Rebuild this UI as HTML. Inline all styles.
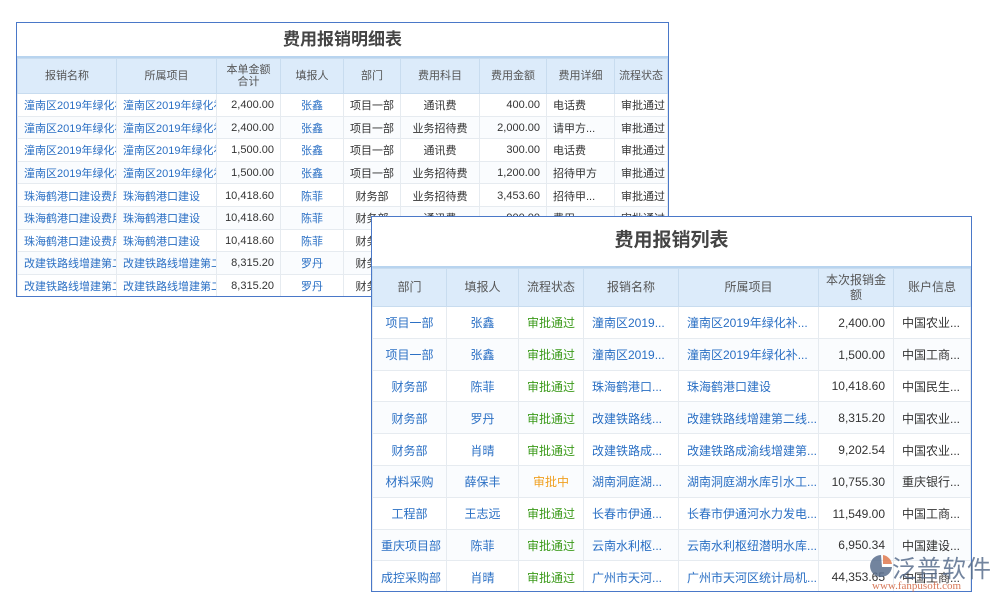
<!DOCTYPE html><html><head><meta charset="utf-8"><style>
*{margin:0;padding:0;box-sizing:border-box}
body{width:1000px;height:600px;background:#fff;position:relative;overflow:hidden;font-family:"Liberation Sans","Noto Sans CJK SC",sans-serif;}
.box{position:absolute;background:#fff;border:1px solid #4a78c8;overflow:hidden}
.title{text-align:center;font-weight:bold;color:#444;}
table{border-collapse:collapse;table-layout:fixed;width:100%}
td,th{border:1px solid #e6ebf0;white-space:nowrap;overflow:hidden;text-overflow:clip;font-weight:normal;vertical-align:middle}
th{background:#dcebfa;color:#555;border-color:#c8dcef}
tr:nth-child(odd) td{background:#fafcfe}
.b{color:#2a6fc4}.g{color:#3b9a1a}.o{color:#f0a020}.k{color:#333}
.r{text-align:right}.c{text-align:center}.l{text-align:left}
#t1{left:16px;top:22px;width:653px;height:275px}
#t1 .title{height:35px;line-height:33px;font-size:17px;border-bottom:2px solid #b8d4ef}
#t1 th{height:35px;font-size:11px;line-height:12px}
#t1 td{height:22.6px;font-size:11px;padding:1px 6px 0}
#t2{left:371px;top:216px;width:601px;height:376px}
#t2 .title{height:51px;line-height:48px;font-size:19px;border-bottom:2px solid #b8d4ef}
#t2 th{height:38px;font-size:12px;line-height:15px}
#t2 td{height:31.8px;font-size:12px;padding:1px 8px 0}
</style></head><body>
<div class="box" id="t1"><div class="title">费用报销明细表</div>
<table><colgroup><col style="width:99px"><col style="width:100px"><col style="width:64px"><col style="width:63px"><col style="width:57px"><col style="width:79px"><col style="width:67px"><col style="width:68px"><col></colgroup>
<tr><th>报销名称</th><th>所属项目</th><th>本单金额<br>合计</th><th>填报人</th><th>部门</th><th>费用科目</th><th>费用金额</th><th>费用详细</th><th>流程状态</th></tr>
<tr><td class="b">潼南区2019年绿化补</td><td class="b">潼南区2019年绿化补</td><td class="r k">2,400.00</td><td class="c b">张鑫</td><td class="c k">项目一部</td><td class="c k">通讯费</td><td class="r k">400.00</td><td class="k">电话费</td><td class="k">审批通过</td></tr>
<tr><td class="b">潼南区2019年绿化补</td><td class="b">潼南区2019年绿化补</td><td class="r k">2,400.00</td><td class="c b">张鑫</td><td class="c k">项目一部</td><td class="c k">业务招待费</td><td class="r k">2,000.00</td><td class="k">请甲方...</td><td class="k">审批通过</td></tr>
<tr><td class="b">潼南区2019年绿化补</td><td class="b">潼南区2019年绿化补</td><td class="r k">1,500.00</td><td class="c b">张鑫</td><td class="c k">项目一部</td><td class="c k">通讯费</td><td class="r k">300.00</td><td class="k">电话费</td><td class="k">审批通过</td></tr>
<tr><td class="b">潼南区2019年绿化补</td><td class="b">潼南区2019年绿化补</td><td class="r k">1,500.00</td><td class="c b">张鑫</td><td class="c k">项目一部</td><td class="c k">业务招待费</td><td class="r k">1,200.00</td><td class="k">招待甲方</td><td class="k">审批通过</td></tr>
<tr><td class="b">珠海鹤港口建设费用</td><td class="b">珠海鹤港口建设</td><td class="r k">10,418.60</td><td class="c b">陈菲</td><td class="c k">财务部</td><td class="c k">业务招待费</td><td class="r k">3,453.60</td><td class="k">招待甲...</td><td class="k">审批通过</td></tr>
<tr><td class="b">珠海鹤港口建设费用</td><td class="b">珠海鹤港口建设</td><td class="r k">10,418.60</td><td class="c b">陈菲</td><td class="c k">财务部</td><td class="c k">通讯费</td><td class="r k">900.00</td><td class="k">费用</td><td class="k">审批通过</td></tr>
<tr><td class="b">珠海鹤港口建设费用</td><td class="b">珠海鹤港口建设</td><td class="r k">10,418.60</td><td class="c b">陈菲</td><td class="c k">财务部</td><td></td><td></td><td></td><td></td></tr>
<tr><td class="b">改建铁路线增建第二</td><td class="b">改建铁路线增建第二</td><td class="r k">8,315.20</td><td class="c b">罗丹</td><td class="c k">财务部</td><td></td><td></td><td></td><td></td></tr>
<tr><td class="b">改建铁路线增建第二</td><td class="b">改建铁路线增建第二</td><td class="r k">8,315.20</td><td class="c b">罗丹</td><td class="c k">财务部</td><td></td><td></td><td></td><td></td></tr>
</table></div>
<div class="box" id="t2"><div class="title">费用报销列表</div>
<table><colgroup><col style="width:74px"><col style="width:72px"><col style="width:65px"><col style="width:95px"><col style="width:140px"><col style="width:75px"><col></colgroup>
<tr><th>部门</th><th>填报人</th><th>流程状态</th><th>报销名称</th><th>所属项目</th><th>本次报销金<br>额</th><th>账户信息</th></tr>
<tr><td class="c b">项目一部</td><td class="c b">张鑫</td><td class="c g">审批通过</td><td class="b">潼南区2019...</td><td class="b">潼南区2019年绿化补...</td><td class="r k">2,400.00</td><td class="k">中国农业...</td></tr>
<tr><td class="c b">项目一部</td><td class="c b">张鑫</td><td class="c g">审批通过</td><td class="b">潼南区2019...</td><td class="b">潼南区2019年绿化补...</td><td class="r k">1,500.00</td><td class="k">中国工商...</td></tr>
<tr><td class="c b">财务部</td><td class="c b">陈菲</td><td class="c g">审批通过</td><td class="b">珠海鹤港口...</td><td class="b">珠海鹤港口建设</td><td class="r k">10,418.60</td><td class="k">中国民生...</td></tr>
<tr><td class="c b">财务部</td><td class="c b">罗丹</td><td class="c g">审批通过</td><td class="b">改建铁路线...</td><td class="b">改建铁路线增建第二线...</td><td class="r k">8,315.20</td><td class="k">中国农业...</td></tr>
<tr><td class="c b">财务部</td><td class="c b">肖晴</td><td class="c g">审批通过</td><td class="b">改建铁路成...</td><td class="b">改建铁路成渝线增建第...</td><td class="r k">9,202.54</td><td class="k">中国农业...</td></tr>
<tr><td class="c b">材料采购</td><td class="c b">薛保丰</td><td class="c o">审批中</td><td class="b">湖南洞庭湖...</td><td class="b">湖南洞庭湖水库引水工...</td><td class="r k">10,755.30</td><td class="k">重庆银行...</td></tr>
<tr><td class="c b">工程部</td><td class="c b">王志远</td><td class="c g">审批通过</td><td class="b">长春市伊通...</td><td class="b">长春市伊通河水力发电...</td><td class="r k">11,549.00</td><td class="k">中国工商...</td></tr>
<tr><td class="c b">重庆项目部</td><td class="c b">陈菲</td><td class="c g">审批通过</td><td class="b">云南水利枢...</td><td class="b">云南水利枢纽潜明水库...</td><td class="r k">6,950.34</td><td class="k">中国建设...</td></tr>
<tr><td class="c b">成控采购部</td><td class="c b">肖晴</td><td class="c g">审批通过</td><td class="b">广州市天河...</td><td class="b">广州市天河区统计局机...</td><td class="r k">44,353.65</td><td class="k">中国工商...</td></tr>
</table></div>
<div style="position:absolute;left:868px;top:551px;width:130px;height:45px;opacity:.85">
<svg width="26" height="26" style="position:absolute;left:0;top:2px" viewBox="0 0 26 26"><path d="M13 2 A11 11 0 1 0 24 14 L14 14 Z" fill="#5a6f8e"/><path d="M15 2 A11 11 0 0 1 24 11 L15 11 Z" fill="#e07a50"/></svg>
<div style="position:absolute;left:24px;top:-2px;font-size:24px;color:#5a6f8e;font-family:'Noto Sans CJK SC',sans-serif;letter-spacing:1px">泛普软件</div>
<div style="position:absolute;left:4px;top:29px;font-size:11px;color:#d0603a;font-family:'Liberation Serif',serif">www.fanpusoft.com</div>
</div>
</body></html>
